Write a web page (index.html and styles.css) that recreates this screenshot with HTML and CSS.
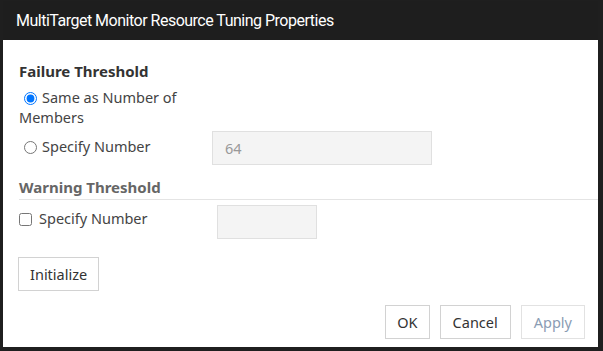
FILE: index.html
```html
<!DOCTYPE html>
<html lang="en">
<head>
  <meta charset="UTF-8">
  <title>MultiTarget Monitor Resource Tuning Properties</title>
  <link rel="stylesheet" href="styles.css">
</head>
<body>
  <div class="dialog">
    <div class="dialog-header">MultiTarget Monitor Resource Tuning Properties</div>

    <div class="dialog-body">
      <h3 class="group-title">Failure Threshold</h3>
      <div class="option-grid">
        <label class="option wrap"><input type="radio" name="failure" checked>Same as Number of Members</label>
        <span></span>
        <label class="option raised"><input type="radio" name="failure">Specify Number</label>
        <input type="text" class="text-field wide" value="64" disabled>
      </div>

      <h3 class="group-title ruled">Warning Threshold</h3>
      <div class="check-row">
        <label class="option"><input type="checkbox">Specify Number</label>
        <input type="text" class="text-field narrow" disabled>
      </div>

      <button class="btn init-btn">Initialize</button>
    </div>

    <div class="dialog-footer">
      <button class="btn ok-btn">OK</button>
      <button class="btn">Cancel</button>
      <button class="btn disabled">Apply</button>
    </div>
  </div>
</body>
</html>
```

FILE: styles.css
```css
body {
  margin: 0;
  background: #1f1f1f;
  font-family: "Noto Sans", "Open Sans", sans-serif;
  font-size: 14.5px;
  color: #333;
}
.dialog {
  margin: 1px 0 0 3px;
  width: 595px;
  height: 346px;
  background: #fff;
  display: flex;
  flex-direction: column;
}
.dialog-header {
  height: 39px;
  background: #1e1e1e;
  color: #fff;
  font-family: Roboto, "Noto Sans", sans-serif;
  font-size: 16px;
  letter-spacing: -0.5px;
  padding-left: 13px;
  display: flex;
  align-items: center;
}
.dialog-body {
  flex: 1;
  padding-left: 16px;
}
.group-title {
  margin: 21px 0 0 0;
  font-size: 15px;
  line-height: 20px;
  font-weight: bold;
  color: #333;
}
.group-title.ruled {
  margin-top: 12px;
  padding-bottom: 2px;
  border-bottom: 1px solid #e4e4e4;
  color: #666;
}
.option-grid {
  display: grid;
  grid-template-columns: 193px 220px;
  row-gap: 4px;
  margin-top: 6px;
  align-items: center;
}
.option {
  line-height: 20px;
  color: #444;
}
.option.wrap {
  width: 170px;
}
.option.raised {
  position: relative;
  top: -2px;
}
.option input {
  margin: 0 5px 0 5px;
  vertical-align: -2px;
}
.option input[type="checkbox"] {
  margin: 0 7px 0 0;
}
.text-field {
  box-sizing: border-box;
  height: 34px;
  border: 1px solid #e0e0e0;
  background: #f4f4f4;
  font: inherit;
  color: #999;
  padding: 0 12px;
}
.text-field.wide {
  width: 220px;
}
.text-field.narrow {
  width: 100px;
}
.check-row {
  display: grid;
  grid-template-columns: 198px 100px;
  align-items: start;
  margin-top: 5px;
}
.check-row .option {
  padding-top: 3px;
}
.btn {
  height: 34px;
  padding: 0 12px;
  background: #fff;
  border: 1px solid #d2d2d2;
  font: inherit;
  color: #333;
}
.init-btn {
  margin-top: 18px;
  margin-left: -1px;
  padding: 0 11px;
}
.ok-btn {
  padding: 0 11px;
}
.dialog-footer {
  display: flex;
  justify-content: flex-end;
  gap: 10px;
  padding: 0 13px 8px 0;
}
.btn.disabled {
  color: #8a9cb3;
  border-color: #e2e2e2;
}
```
